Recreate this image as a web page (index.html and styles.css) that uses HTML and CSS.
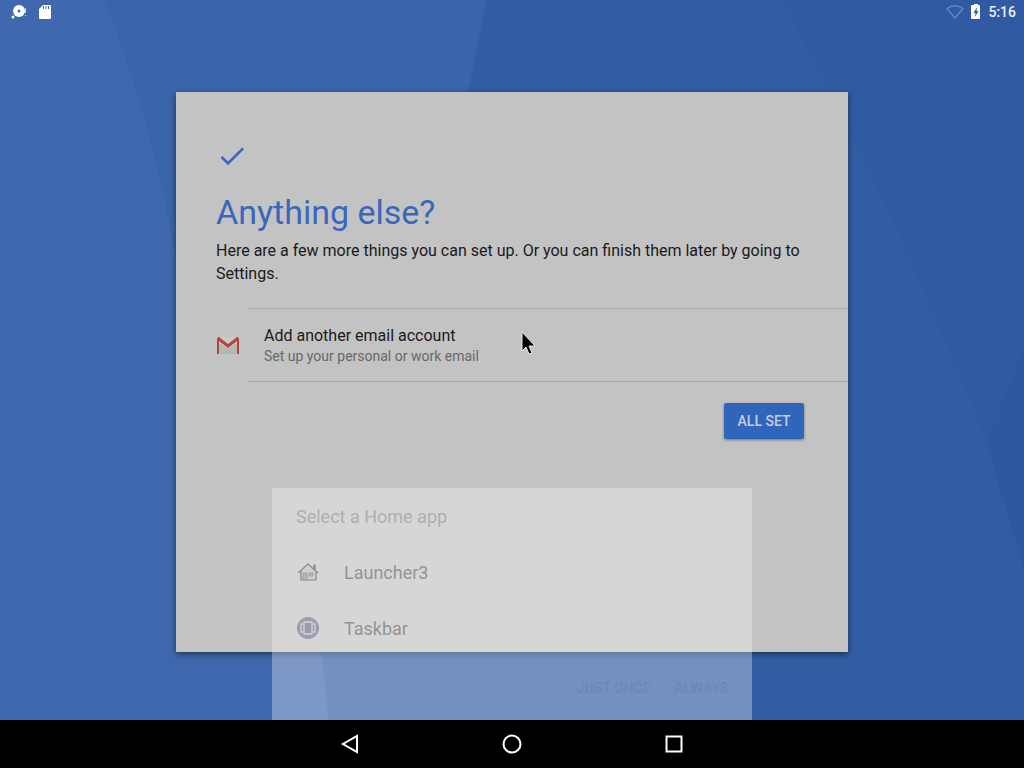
FILE: index.html
```html
<!DOCTYPE html>
<html lang="en">
<head>
	<meta charset="UTF-8">
	<meta name="viewport" content="width=device-width, initial-scale=1">
	<title>Anything else?</title>
	<link rel="stylesheet" href="styles.css">
</head>
<body>
	<svg class="wallpaper" viewBox="0 0 1024 768" preserveAspectRatio="none" aria-hidden="true">
		<rect width="1024" height="768" fill="#4068ae"/>
		<path d="M104 0Q150 110 176 260Q230 460 320 652L334 768H1024V0Z" fill="#3965aa"/>
		<path d="M487 0L468 92L322 652L334 768H1024V0Z" fill="#315da3"/>
		<path d="M780 0Q860 130 990 450L1024 570V0Z" fill="#305ba2"/>
		<path d="M1024 350L986 440L1024 570Z" fill="#2e589f"/>
	</svg>
	<div class="screen">
		<header class="status">
			<div class="status-group">
				<svg width="18" height="16" viewBox="0 0 18 16" aria-hidden="true">
					<circle cx="8" cy="7" r="6" fill="#fff"/>
					<circle cx="8" cy="7" r="1.5" fill="#4068ae"/>
					<circle cx="2" cy="13" r="1.5" fill="#fff"/>
					<path d="M14 4h1v5h-1zM14 11h1v1h-1z" fill="#c9d6ec"/>
				</svg>
				<svg width="12" height="14" viewBox="0 0 12 14" aria-hidden="true">
					<path d="M4 0h7q1 0 1 1v12q0 1-1 1H1q-1 0-1-1V4z" fill="#fff"/>
					<path d="M4 1h1v3H4zM6.500 1h1v3h-1zM9 1h1v3H9z" fill="#4068ae"/>
				</svg>
			</div>
			<div class="status-group status-right">
				<svg width="18" height="14" viewBox="0 0 18 14" aria-hidden="true">
					<path d="M1 3.500Q9-2 17 3.500L9 13z" fill="none" stroke="#5f86c0" stroke-width="1.500"/>
				</svg>
				<svg width="10" height="16" viewBox="0 0 10 16" aria-hidden="true">
					<path d="M3 1V0h4v1h1q1 0 1 1v12q0 1-1 1H1q-1 0-1-1V2q0-1 1-1z" fill="#fff"/>
					<path d="M6 3L2.500 9H4.500L4 13L7.500 7H5.500z" fill="#305ca2"/>
				</svg>
				<time class="clock">5:16</time>
			</div>
		</header>

		<main class="stage">
			<section class="card">
				<div class="card-head">
					<svg class="check" viewBox="0 0 24 24" aria-hidden="true">
						<path d="M9 16.200L4.800 12l-1.400 1.400L9 19 21 7l-1.400-1.400z" fill="#3a67be"/>
					</svg>
					<h1>Anything else?</h1>
					<p>Here are a few more things you can set up. Or you can finish them later by going to Settings.</p>
				</div>
				<button class="account" type="button">
					<svg width="24" height="20" viewBox="0 0 24 20" aria-hidden="true">
						<path d="M2 1h20q1 0 1 1v16H1V2q0-1 1-1z" fill="#c9cbc7"/>
						<path d="M3 18V7l9 6 9-6v11z" fill="#b3b7b0"/>
						<path d="M1 18V3q0-2 2-2l9 7 9-7q2 0 2 2v15h-2V5l-9 7-9-7v13z" fill="#b5433f"/>
					</svg>
					<span class="account-text">
						<span class="account-title">Add another email account</span>
						<span class="account-sub">Set up your personal or work email</span>
					</span>
				</button>
				<div class="card-foot">
					<button class="all-set" type="button">ALL SET</button>
				</div>
			</section>

			<div class="overlay">
				<section class="chooser" role="dialog" aria-labelledby="chooser-title">
					<h2 id="chooser-title">Select a Home app</h2>
					<button class="app" type="button">
						<svg width="24" height="24" viewBox="0 0 24 24" aria-hidden="true">
							<path d="M4 12L12 5l8 7v8H4z" fill="#e3f5e0"/>
							<path d="M2 13L12 4l10 9M5 11v9h15v-9M18 9V5h1v5" fill="none" stroke="#111" stroke-width="1.200"/>
							<path d="M7 13h4v7H7zM13 13h4v3h-4z" fill="#94a78e" stroke="#53664e"/>
						</svg>
						Launcher3
					</button>
					<button class="app" type="button">
						<svg width="24" height="24" viewBox="0 0 24 24" aria-hidden="true">
							<circle cx="12" cy="12" r="11" fill="#46508c"/>
							<path d="M8 6h8v12H8zM7 8H5v8h2M17 8h2v8h-2" fill="none" stroke="#fff" stroke-width="1.300"/>
						</svg>
						Taskbar
					</button>
					<div class="chooser-foot">
						<button type="button" disabled>JUST ONCE</button>
						<button type="button" disabled>ALWAYS</button>
					</div>
				</section>
			</div>
		</main>

		<nav class="navbar">
			<button type="button" aria-label="Back">
				<svg width="24" height="24" viewBox="0 0 24 24" aria-hidden="true"><path d="M19 4v16L5 12z"/></svg>
			</button>
			<button type="button" aria-label="Home">
				<svg width="24" height="24" viewBox="0 0 24 24" aria-hidden="true"><circle cx="12" cy="12" r="8.500"/></svg>
			</button>
			<button type="button" aria-label="Recent apps">
				<svg width="24" height="24" viewBox="0 0 24 24" aria-hidden="true"><rect x="4.500" y="4.500" width="15" height="15"/></svg>
			</button>
		</nav>
	</div>
	<svg class="pointer" width="18" height="26" viewBox="0 0 18 26" aria-hidden="true">
		<path d="M1 1v19l4-4 3 7 3-1-3-7h6z" fill="#000" stroke="#e6e6e6"/>
	</svg>
</body>
</html>
```
FILE: styles.css
```css
* {
	box-sizing: border-box;
}
body {
	margin: 0;
	font-family: Roboto, "Liberation Sans", sans-serif;
	background: #305ca2;
}
button {
	margin: 0;
	padding: 0;
	border: none;
	background: none;
	font-family: inherit;
	cursor: pointer;
}
svg {
	display: block;
	flex-shrink: 0;
}
.wallpaper {
	position: absolute;
	top: 0;
	left: 0;
	width: 100%;
	height: 100%;
}
.screen {
	position: relative;
	display: flex;
	flex-direction: column;
	min-height: 100vh;
}

/* status bar */
.status {
	display: flex;
	justify-content: space-between;
	align-items: center;
	height: 24px;
	padding: 0 8px 0 11px;
}
.status-group {
	display: flex;
	align-items: center;
	gap: 10px;
}
.status-right {
	gap: 7px;
}
.clock {
	color: #e9eff8;
	font-size: 14px;
	font-weight: 500;
}

/* setup card */
.stage {
	position: relative;
	flex: 1;
	display: flex;
	justify-content: center;
	align-items: center;
}
.card {
	width: 100%;
	max-width: 672px;
	min-height: 560px;
	padding-top: 48px;
	background: #c3c3c3;
	box-shadow: 0 2px 6px rgba(0, 0, 0, 0.5);
}
.card-head {
	padding: 0 40px 23px;
}
.check {
	width: 32px;
	height: 32px;
}
h1 {
	margin: 19px 0 6px;
	color: #3a67be;
	font-size: 34px;
	font-weight: 400;
	line-height: 42px;
}
.card-head p {
	margin: 0;
	color: #1a1a1a;
	font-size: 16px;
	line-height: 23px;
}
.account {
	display: flex;
	align-items: center;
	gap: 24px;
	width: 100%;
	height: 74px;
	padding: 2px 0 0 40px;
	text-align: left;
	background: linear-gradient(#a8a8a8, #a8a8a8) 72px 0 / 100% 1px no-repeat,
		linear-gradient(#a8a8a8, #a8a8a8) 72px 100% / 100% 1px no-repeat;
}
.account-text {
	display: flex;
	flex-direction: column;
}
.account-title {
	color: #1a1a1a;
	font-size: 16px;
	line-height: 20px;
}
.account-sub {
	color: #686868;
	font-size: 14px;
	line-height: 20px;
}
.card-foot {
	display: flex;
	justify-content: flex-end;
	padding: 21px 44px;
}
.all-set {
	min-width: 80px;
	height: 36px;
	padding: 0 12px;
	border-radius: 2px;
	background: #3065bc;
	color: #c4cfe0;
	font-size: 14px;
	font-weight: 500;
	box-shadow: 0 1px 3px rgba(0, 0, 0, 0.4);
}

/* home app chooser, half way through its fade in */
.overlay {
	position: absolute;
	inset: 0;
	display: flex;
	justify-content: center;
	align-items: flex-end;
}
.chooser {
	width: 100%;
	max-width: 480px;
	background: #fff;
	opacity: 0.32;
}
h2 {
	margin: 0;
	padding: 2px 24px 0;
	color: #858585;
	font-size: 18px;
	font-weight: 400;
	line-height: 54px;
}
.app {
	display: flex;
	align-items: center;
	gap: 24px;
	width: 100%;
	height: 56px;
	padding: 0 24px;
	color: #303030;
	font-size: 18px;
}
.chooser-foot {
	display: flex;
	justify-content: flex-end;
	gap: 24px;
	height: 64px;
	padding: 0 24px;
}
.chooser-foot button {
	color: #e2e5ea;
	font-size: 14px;
	font-weight: 500;
}

/* navigation bar */
.navbar {
	display: flex;
	justify-content: center;
	align-items: center;
	gap: 138px;
	height: 48px;
	background: #000;
}
.navbar svg {
	fill: none;
	stroke: #fff;
	stroke-width: 2;
}
.pointer {
	position: absolute;
	top: 331px;
	left: 521px;
	pointer-events: none;
}
```
